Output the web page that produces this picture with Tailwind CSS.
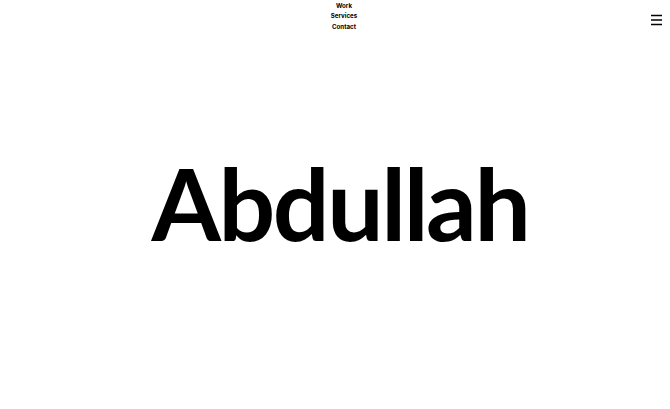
<!DOCTYPE html>
<html lang="en">
<head>
<meta charset="utf-8">
<title>Abdullah</title>
<script src="https://cdn.jsdelivr.net/npm/@tailwindcss/browser@4"></script>
</head>
<body class="bg-white text-black">
<div class="relative flex h-[409px] w-[670px] flex-col overflow-hidden font-['Inter',sans-serif]">
  <header class="flex h-[32px] items-start">
    <nav class="flex flex-1 flex-col items-center pt-[0.5px] pl-[37px] text-[6.2px] font-bold leading-[10.7px]">
      <a href="#">Work</a>
      <a href="#">Services</a>
      <a href="#">Contact</a>
    </nav>
    <button class="mt-[14px] mr-[8px] w-[11px]" aria-label="Menu">
      <svg class="block" width="11" height="12" viewBox="0 0 11 12" fill="none" stroke="black" stroke-width="1.4">
        <path d="M0 1.5H11M0 6H11M0 10.5H11"/>
      </svg>
    </button>
  </header>
  <main class="flex flex-1 items-start justify-center pt-[110px] pl-[10px]">
    <h1 class="font-['Lato',sans-serif] text-[100px] leading-[120px] font-bold tracking-[-2.4px]">Abdullah</h1>
  </main>
</div>
</body>
</html>
